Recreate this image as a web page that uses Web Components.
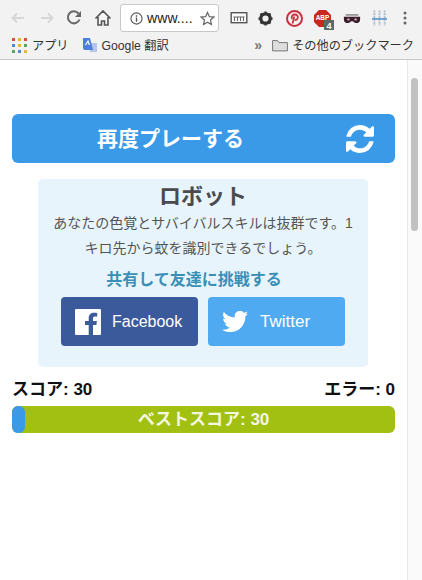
<!DOCTYPE html>
<html lang="ja">
<head>
<meta charset="utf-8">
<title>ロボット</title>
<style>
  html, body { margin: 0; height: 100%; overflow: hidden; background: #fff; }
  body { font-family: "Liberation Sans", "Noto Sans CJK JP", sans-serif; display: flex; flex-direction: column; }
</style>
</head>
<body>
<browser-toolbar></browser-toolbar>
<bookmark-bar></bookmark-bar>
<page-view>
  <play-button>再度プレーする</play-button>
  <result-card title-text="ロボット">
    あなたの色覚とサバイバルスキルは抜群です。1キロ先から蚊を識別できるでしょう。
  </result-card>
  <score-row score="30" errors="0"></score-row>
  <best-bar>ベストスコア: 30</best-bar>
</page-view>

<script>
class BrowserToolbar extends HTMLElement {
  constructor() {
    super();
    this.attachShadow({ mode: 'open' });
  }
  connectedCallback() {
    this.shadowRoot.innerHTML = `
      <style>
        :host { display: flex; align-items: center; height: 36px; box-sizing: border-box; padding: 0 5px 0 8px; background: #f2f2f2; flex: none; }
        svg { display: block; flex: none; }
        .nav { display: flex; align-items: center; gap: 9px; margin-right: 8px; }
        .omni { display: flex; align-items: center; width: 99px; height: 28px; box-sizing: border-box; background: #fff; border: 1px solid #c8c8c8; border-radius: 3px; padding: 0 3px 0 9px; font: 14px "Liberation Sans", sans-serif; color: #222; flex: none; }
        .omni span { margin-left: 4px; flex: 1; letter-spacing: .1px; }
        .ext { display: flex; align-items: center; }
      </style>
      <div class="nav">
        <svg width="20" height="16" viewBox="0 0 20 16"><path d="M16 8H5M9 3.500 4.500 8 9 12.500" fill="none" stroke="#d6d6d6" stroke-width="2"/></svg>
        <svg width="20" height="16" viewBox="0 0 20 16"><path d="M4 8h11M11 3.500 15.500 8 11 12.500" fill="none" stroke="#d6d6d6" stroke-width="2"/></svg>
        <svg width="16" height="16" viewBox="0 0 16 16"><path d="M13.500 9.500A6 6 0 1 1 12.500 3.500" fill="none" stroke="#666" stroke-width="2"/><path d="M15 1v6H9z" fill="#666"/></svg>
        <svg width="18" height="18" viewBox="0 0 18 18" style="margin-left:3px"><path d="M1.500 9.500 9 2l7.500 7.500M4 8v8h3.500v-4h3v4H14V8" fill="#f4f4f4" stroke="#555" stroke-width="1.600"/></svg>
      </div>
      <div class="omni">
        <svg width="13" height="13" viewBox="0 0 14 14"><circle cx="7" cy="7" r="6" fill="none" stroke="#555" stroke-width="1.200"/><path d="M7 6v4.500M7 3.500v1.500" stroke="#555" stroke-width="1.500"/></svg>
        <span>www....</span>
        <svg width="15" height="15" viewBox="0 0 16 16"><path d="m8 1.500 2 4.500 4.800.5-3.600 3.200 1 4.800L8 12l-4.200 2.500 1-4.800L1.200 6.500 6 6z" fill="none" stroke="#666" stroke-width="1.300"/></svg>
      </div>
      <div class="ext">
        <svg style="margin-left:11px" width="18" height="12" viewBox="0 0 17 12"><rect x=".7" y=".7" width="15.600" height="10" fill="#fafafa" stroke="#555" stroke-width="1.400"/><path d="M3 5h11M4 5v4M7 5v4M10 5v4M13 5v4" stroke="#666"/></svg>
        <svg style="margin-left:10px" width="15" height="15" viewBox="0 0 16 16"><circle cx="8" cy="8" r="5" fill="none" stroke="#333" stroke-width="3.400"/><path d="M8 .5v3M8 12.500v3M.5 8h3M12.500 8h3M2.700 2.700l2.100 2.100M11.200 11.200l2.100 2.100M13.300 2.700l-2.100 2.100M4.800 11.200l-2.100 2.100" stroke="#333" stroke-width="2.400"/></svg>
        <svg style="margin-left:13px" width="17" height="17" viewBox="0 0 17 17"><circle cx="8.500" cy="8.500" r="7.500" fill="none" stroke="#c8313f" stroke-width="2"/><path d="M6.500 13.500 8.300 6.500M6 8.800C4.800 6 7 4.500 8.800 4.500c2 0 3.200 1.300 3 3-.2 1.800-1.500 2.800-3 2.600" fill="none" stroke="#c8313f" stroke-width="1.800"/></svg>
        <svg style="margin:4px 0 0 11px" width="21" height="20" viewBox="0 0 21 20"><path d="M5 0h7l5 5v7l-5 5H5l-5-5V5z" fill="#c8281e"/><text x="8.500" y="9.500" font-size="6.500" font-weight="700" font-family="Liberation Sans" text-anchor="middle" fill="#fff">ABP</text><rect x="10" y="10" width="10" height="10" fill="#5a6a66"/><text x="15" y="18.500" font-size="9" font-weight="700" font-family="Liberation Sans" text-anchor="middle" fill="#fff">4</text></svg>
        <svg style="margin-left:8px" width="18" height="11" viewBox="0 0 20 12"><path d="M3 1h14v2H3z" fill="#999"/><path d="M1 4h18v3c0 3-2 4-4 4-3 0-3-2-5-2s-2 2-5 2c-2 0-4-1-4-4z" fill="#3b1d2b"/><circle cx="6" cy="7" r="1.300" fill="#d9a4b5"/><circle cx="14" cy="7" r="1.300" fill="#d9a4b5"/></svg>
        <svg style="margin-left:11px" width="15" height="18" viewBox="0 0 16 18"><path d="M2.500 1v16M8 1v16M13.500 1v16" stroke="#a9bccc" stroke-width="2" stroke-dasharray="2 1"/><path d="M0 10h16" stroke="#6d9fd0" stroke-width="2"/></svg>
        <svg style="margin-left:16px" width="4" height="14" viewBox="0 0 4 14"><circle cx="2" cy="2" r="1.500" fill="#666"/><circle cx="2" cy="7" r="1.500" fill="#666"/><circle cx="2" cy="12" r="1.500" fill="#666"/></svg>
      </div>
    `;
  }
}

class BookmarkBar extends HTMLElement {
  constructor() {
    super();
    this.attachShadow({ mode: 'open' });
  }
  connectedCallback() {
    const dots = ['#d8503f','#e8b53c','#d8503f','#4f8ad8','#e8b53c','#58a55c','#58a55c','#4f8ad8','#e8b53c'];
    this.shadowRoot.innerHTML = `
      <style>
        :host { display: flex; align-items: center; height: 24px; box-sizing: border-box; padding: 0 8px 5px 12px; background: #f2f2f2; border-bottom: 1px solid #c9c9c9; font: 12.200px "Liberation Sans", "Noto Sans CJK JP", sans-serif; color: #333; flex: none; }
        .mark { display: flex; align-items: center; }
        .grid { display: grid; grid-template-columns: repeat(3, 3px); gap: 3px; margin-right: 5px; }
        .grid i { width: 3px; height: 3px; display: block; }
        .gt { margin-left: 13px; }
        .gt svg { margin-right: 4px; }
        .more { margin-left: auto; display: flex; align-items: center; }
        .chev { color: #777; font-size: 14px; font-weight: 700; margin-right: 10px; }
        .more svg { margin-right: 4px; }
        svg { display: block; }
      </style>
      <div class="mark"><span class="grid">${dots.map(c => `<i style="background:${c}"></i>`).join('')}</span>アプリ</div>
      <div class="mark gt">
        <svg width="16" height="16" viewBox="0 0 16 16"><path d="M7 6h8v9H8z" fill="#b6c6e6"/><path d="M1 1h7l3 12H3a2 2 0 0 1-2-2z" fill="#4a80dc"/><path d="M3.500 8 6 4l1.500 4" fill="none" stroke="#fff" stroke-width="1.200"/></svg>
        Google 翻訳
      </div>
      <div class="more">
        <span class="chev">»</span>
        <svg width="16" height="13" viewBox="0 0 16 13"><path d="M.6 11.900V1.600h5l1.400 2h8.400v8.300z" fill="#dedede" stroke="#777"/></svg>
        その他のブックマーク
      </div>
    `;
  }
}

class PageView extends HTMLElement {
  constructor() {
    super();
    this.attachShadow({ mode: 'open' });
  }
  connectedCallback() {
    this.shadowRoot.innerHTML = `
      <style>
        :host { display: flex; flex: 1; min-height: 0; background: #fff; }
        main { flex: 1; min-width: 0; box-sizing: border-box; padding: 54px 12px 0; display: flex; flex-direction: column; }
        .track { width: 15px; flex: none; box-sizing: border-box; background: #fafafa; border-left: 1px solid #e8e8e8; padding: 18px 4px 0 3px; }
        .thumb { height: 153px; background: #c1c1c1; border-radius: 4px; }
      </style>
      <main><slot></slot></main>
      <div class="track"><div class="thumb"></div></div>
    `;
  }
}

class PlayButton extends HTMLElement {
  constructor() {
    super();
    this.attachShadow({ mode: 'open' });
  }
  connectedCallback() {
    this.shadowRoot.innerHTML = `
      <style>
        :host { display: flex; align-items: center; height: 49px; background: #3b9ae8; border-radius: 6px; color: #fff; font-weight: 700; font-size: 21px; position: relative; padding-bottom: 3px; box-sizing: border-box; }
        .label { width: 100%; text-align: center; padding-right: 66px; box-sizing: border-box; }
        svg { position: absolute; right: 21px; top: 11px; }
      </style>
      <div class="label"><slot></slot></div>
      <svg width="28" height="28" viewBox="0 0 1536 1536"><path d="M1511 928q0 5-1 7-64 268-268 434.500t-478 166.500q-146 0-282.500-55t-243.500-157l-129 129q-19 19-45 19t-45-19-19-45v-448q0-26 19-45t45-19h448q26 0 45 19t19 45-19 45l-137 137q71 66 161 102t187 36q134 0 250-65t186-179q11-17 53-117 8-23 30-23h192q13 0 22.500 9.500t9.500 22.500zm25-800v448q0 26-19 45t-45 19h-448q-26 0-45-19t-19-45 19-45l138-138q-148-137-349-137-134 0-250 65t-186 179q-11 17-53 117-8 23-30 23h-199q-13 0-22.500-9.500t-9.500-22.500v-7q65-268 270-434.500t480-166.500q146 0 284 55.500t245 156.500l130-129q19-19 45-19t45 19 19 45z" fill="#fff"/></svg>
    `;
  }
}

class ResultCard extends HTMLElement {
  constructor() {
    super();
    this.attachShadow({ mode: 'open' });
  }
  connectedCallback() {
    this.shadowRoot.innerHTML = `
      <style>
        :host { display: block; width: 330px; box-sizing: border-box; height: 188px; margin: 16px 0 0 26px; padding: 4px 12px 0; background: #e8f4fb; border-radius: 5px; text-align: center; }
        h2 { margin: 0; font-size: 22px; line-height: 27px; color: #4a4a4f; font-weight: 700; }
        p { margin: 1px 0 0; font-size: 14px; line-height: 24.500px; color: #555; }
        h3 { margin: 9px 0 0; padding-right: 18px; font-size: 16px; line-height: 22px; font-weight: 700; color: #3a8fb7; }
        .share { display: flex; justify-content: center; gap: 10px; margin-top: 6px; }
      </style>
      <h2>${this.getAttribute('title-text')}</h2>
      <p><slot></slot></p>
      <h3>共有して友達に挑戦する</h3>
      <div class="share">
        <share-button kind="facebook">Facebook</share-button>
        <share-button kind="twitter">Twitter</share-button>
      </div>
    `;
  }
}

class ShareButton extends HTMLElement {
  constructor() {
    super();
    this.attachShadow({ mode: 'open' });
  }
  connectedCallback() {
    const fb = this.getAttribute('kind') === 'facebook';
    const icon = fb
      ? `<svg width="26" height="26" viewBox="0 0 26 26"><path d="M1 0h24a1 1 0 0 1 1 1v24a1 1 0 0 1-1 1h-7V16h3.400l.5-4H18V9.500c0-1.200.4-2 2-2h2.200V4c-.4-.1-1.700-.2-3.200-.2-3.200 0-5.300 1.900-5.300 5.400V12H10v4h3.700v10H1a1 1 0 0 1-1-1V1a1 1 0 0 1 1-1z" fill="#fff"/></svg>`
      : `<svg width="26" height="22" viewBox="0 0 26 22"><path d="M26 2.600c-1 .4-2 .7-3.100.8 1.100-.7 2-1.700 2.400-3-1 .6-2.200 1.100-3.400 1.300A5.300 5.300 0 0 0 12.800 6.600C8.400 6.400 4.500 4.300 1.800 1 .4 3.400 1.100 6.500 3.500 8.100c-.9 0-1.700-.3-2.400-.7 0 2.600 1.800 4.800 4.300 5.300-.8.200-1.600.2-2.400.1.700 2.100 2.700 3.600 5 3.700A10.700 10.700 0 0 1 0 18.700C2.400 20.200 5.200 21 8.200 21c9.800 0 15.400-8.300 15.200-15.700 1-.8 1.900-1.700 2.600-2.700z" fill="#fff"/></svg>`;
    this.shadowRoot.innerHTML = `
      <style>
        :host { display: flex; align-items: center; width: 137px; height: 49px; box-sizing: border-box; padding-left: 14px; border-radius: 4px; background: ${fb ? '#3b5a9b' : '#4faaf1'}; color: #fff; font-size: ${fb ? 16 : 17}px; }
        svg { display: block; flex: none; }
        span { margin-left: ${fb ? 11 : 12}px; }
      </style>
      ${icon}<span><slot></slot></span>
    `;
  }
}

class ScoreRow extends HTMLElement {
  constructor() {
    super();
    this.attachShadow({ mode: 'open' });
  }
  connectedCallback() {
    this.shadowRoot.innerHTML = `
      <style>
        :host { display: flex; justify-content: space-between; margin-top: 13px; font-size: 17px; line-height: 20px; font-weight: 700; color: #111; }
      </style>
      <span>スコア: ${this.getAttribute('score')}</span>
      <span>エラー: ${this.getAttribute('errors')}</span>
    `;
  }
}

class BestBar extends HTMLElement {
  constructor() {
    super();
    this.attachShadow({ mode: 'open' });
  }
  connectedCallback() {
    this.shadowRoot.innerHTML = `
      <style>
        :host { display: block; position: relative; height: 27px; margin-top: 6px; border-radius: 6px; background: #a1c012; overflow: hidden; color: #f4f7e0; font-size: 17px; font-weight: 700; line-height: 27px; text-align: center; }
        .fill { position: absolute; left: 0; top: 0; bottom: 0; width: 13px; background: #3b9ae8; border-radius: 0 6px 6px 0; }
        .label { position: relative; }
      </style>
      <div class="fill"></div>
      <div class="label"><slot></slot></div>
    `;
  }
}

customElements.define('browser-toolbar', BrowserToolbar);
customElements.define('bookmark-bar', BookmarkBar);
customElements.define('page-view', PageView);
customElements.define('play-button', PlayButton);
customElements.define('result-card', ResultCard);
customElements.define('share-button', ShareButton);
customElements.define('score-row', ScoreRow);
customElements.define('best-bar', BestBar);
</script>
</body>
</html>
